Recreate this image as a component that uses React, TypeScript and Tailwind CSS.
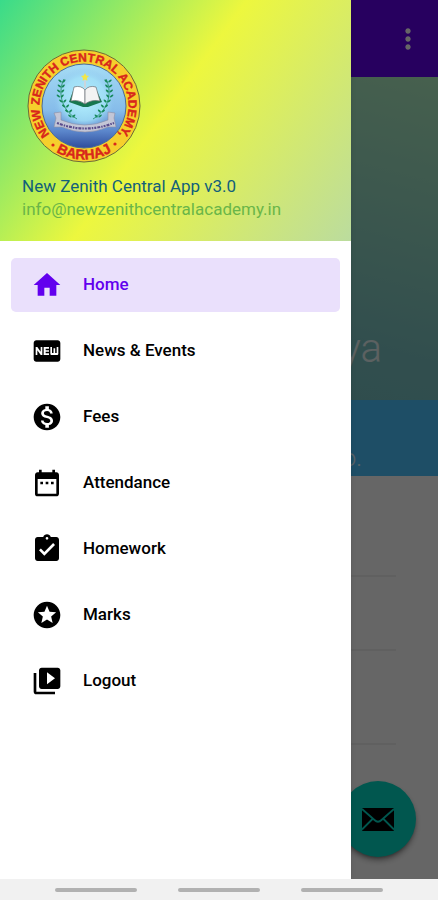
import type { IconType } from "react-icons";
import {
  MdAssignmentTurnedIn,
  MdDateRange,
  MdFiberNew,
  MdHome,
  MdMonetizationOn,
  MdMoreVert,
  MdStars,
  MdVideoLibrary,
} from "react-icons/md";

type MenuEntry = { label: string; icon: IconType; active?: boolean };

const entries: MenuEntry[] = [
  { label: "Home", icon: MdHome, active: true },
  { label: "News & Events", icon: MdFiberNew },
  { label: "Fees", icon: MdMonetizationOn },
  { label: "Attendance", icon: MdDateRange },
  { label: "Homework", icon: MdAssignmentTurnedIn },
  { label: "Marks", icon: MdStars },
  { label: "Logout", icon: MdVideoLibrary },
];

function MenuItem({ label, icon: Icon, active }: MenuEntry) {
  const tone = active ? "bg-[#eae0fc] text-[#6200ee]" : "text-black";
  return (
    <li>
      <a
        href="#"
        aria-current={active ? "page" : undefined}
        className={`flex h-[54px] items-center gap-5 rounded-[5px] pl-5 text-[17px] font-medium ${tone}`}
      >
        <Icon className="size-8" aria-hidden="true" />
        {label}
      </a>
    </li>
  );
}

const leaves = [0, 1, 2, 3, 4, 5, 6, 7];

function Laurel() {
  return (
    <g fill="#16895a">
      <path d="M37 30 C31 42 33 60 50 70" fill="none" stroke="#16895a" strokeWidth="0.8" />
      {leaves.map((i) => {
        const y = 32 + i * 5;
        const x = 35 - Math.sin((i / 7) * 2.4) * 2 + Math.max(0, i - 3) * 2.8;
        return (
          <g key={i}>
            <ellipse cx={x - 2} cy={y} rx="2" ry="0.9" transform={`rotate(35 ${x - 2} ${y})`} />
            <ellipse cx={x + 2} cy={y} rx="2" ry="0.9" transform={`rotate(-45 ${x + 2} ${y})`} />
          </g>
        );
      })}
    </g>
  );
}

function Crest() {
  return (
    <svg viewBox="0 0 114 114" className="size-[114px]" role="img" aria-label="New Zenith Central Academy crest">
      <defs>
        <linearGradient id="sky" x1="0" y1="0" x2="0" y2="1">
          <stop offset="0" stopColor="#a5dcf5" />
          <stop offset="0.55" stopColor="#86bcea" />
          <stop offset="0.8" stopColor="#5b86cb" />
          <stop offset="1" stopColor="#2f4d9c" />
        </linearGradient>
        <radialGradient id="glow">
          <stop offset="0" stopColor="#b4effc" />
          <stop offset="0.7" stopColor="#a2e2f8" stopOpacity="0.8" />
          <stop offset="1" stopColor="#8cc4ee" stopOpacity="0" />
        </radialGradient>
        <path id="ringTop" d="M56.9 101.500 A44.500 44.500 0 1 1 57.1 101.500" />
        <path id="ringBottom" d="M3.500 57 A53.500 53.500 0 0 0 110.500 57" />
      </defs>
      <circle cx="57" cy="57" r="56" fill="#f6cf2c" stroke="#6b6a3a" strokeWidth="1" />
      <circle cx="57" cy="57" r="42" fill="url(#sky)" stroke="#4a6a9a" strokeWidth="1" />
      <circle cx="57" cy="50" r="31" fill="url(#glow)" />
      <text
        fill="#d8261c"
        stroke="#d8261c"
        strokeWidth="0.4"
        fontFamily="'Liberation Sans', Arial, sans-serif"
        fontWeight="700"
        textAnchor="middle"
      >
        <textPath href="#ringTop" startOffset="50%" fontSize="12">
          NEW ZENITH CENTRAL ACADEMY,
        </textPath>
        <textPath href="#ringBottom" startOffset="50%" fontSize="14">
          BARHAJ
        </textPath>
      </text>
      <g fill="#d8261c">
        <circle cx="26" cy="96" r="1.600" />
        <circle cx="88" cy="95" r="1.600" />
      </g>
      <Laurel />
      <g transform="translate(116 0) scale(-1 1)">
        <Laurel />
      </g>
      <path d="M58 24 l1.2 2.6 2.8 .4 -2 2 .4 2.8 -2.4 -1.4 -2.4 1.4 .4 -2.8 -2 -2 2.8 -.4z" fill="#f2e64a" />
      <path d="M57 31 h2 v8 h-2z" fill="#c9d6dc" />
      <path d="M42 53 L46 42 L58 54 L70 42 L75 53 L61 58 L56 58z" fill="#177650" />
      <path d="M47 38 Q54 36 58 41 V55 Q51 50 44 52z" fill="#fff" stroke="#6b7076" strokeWidth="0.7" />
      <path d="M69 38 Q62 36 58 41 V55 Q65 50 73 52z" fill="#f3f3f3" stroke="#6b7076" strokeWidth="0.7" />
      <path d="M27 64 l7 -1 v8 q24 10 47 0 v-8 l7 1 -1 5 2 9 -8 0 q-23 10 -46 0 l-8 0 2 -9z" fill="#c3c6d6" stroke="#8d8fa5" strokeWidth="0.6" />
      <path d="M30 74 q28 11 57 0" fill="none" stroke="#5a4c8c" strokeWidth="2.2" strokeDasharray="2 1 3 1 1.5 1" />
    </svg>
  );
}

function Drawer() {
  return (
    <aside className="absolute inset-y-0 left-0 flex w-[351px] flex-col bg-white shadow-md">
      <header className="bg-[linear-gradient(126deg,#39db8a_0%,#edf73e_47%,#bbdc9e_100%)] pt-[49px] pb-5 pl-[22px]">
        <div className="pl-[5px]">
          <Crest />
        </div>
        <h1 className="pt-3 text-[17px] leading-[22px] text-[#11607a]">New Zenith Central App v3.0</h1>
        <p className="text-[17px] leading-6 text-[#6ab648]">info@newzenithcentralacademy.in</p>
      </header>
      <nav aria-label="Main" className="px-[11px] pt-[17px]">
        <ul className="flex flex-col gap-3">
          {entries.map((entry) => (
            <MenuItem key={entry.label} {...entry} />
          ))}
        </ul>
      </nav>
    </aside>
  );
}

function Page() {
  return (
    <main className="flex grow flex-col bg-white">
      <div className="flex h-[77px] items-center justify-end bg-[#6200ee] pr-[14px]">
        <button aria-label="More options" className="text-white">
          <MdMoreVert className="size-8" />
        </button>
      </div>
      <section className="flex h-[323px] items-end justify-end bg-[linear-gradient(15deg,#70bcbc_0%,#7cc4c4_35%,#b0f0c4_100%)] pr-14 pb-[27px]">
        <p className="text-[40px] leading-12 font-light text-white/80">Vidyalaya</p>
      </section>
      <section className="flex h-[76px] items-end justify-end bg-[#4dc4ff] pr-[76px] pb-1">
        <p className="text-2xl leading-7 font-light text-white/80">No.</p>
      </section>
      <div className="flex flex-col pr-[42px]">
        <div className="h-[101px] border-b-2 border-[#efefef]" />
        <div className="h-[74px] border-b-2 border-[#efefef]" />
        <div className="h-[94px] border-b-2 border-[#efefef]" />
      </div>
    </main>
  );
}

function MailButton() {
  return (
    <button
      aria-label="Send mail"
      className="absolute right-[22px] bottom-[22px] flex size-[76px] items-center justify-center rounded-full bg-[#03dac5] shadow-md shadow-black/40"
    >
      <svg viewBox="0 0 34 24" className="h-6 w-[34px]" aria-hidden="true">
        <rect x="1" y="1" width="32" height="23" rx="1" fill="#000" />
        <path
          d="M1 2 L13.500 13 Q17 16.500 20.500 13 L33 2 M1 22.500 L11.500 12 M33 22.500 L22.500 12"
          fill="none"
          stroke="#03dac5"
          strokeWidth="1.800"
        />
      </svg>
    </button>
  );
}

export default function App() {
  return (
    <div className="flex min-h-screen flex-col font-['Roboto',sans-serif]">
      <div className="relative flex grow flex-col overflow-hidden">
        <Page />
        <MailButton />
        <div className="absolute inset-0 bg-black/60" />
        <Drawer />
      </div>
      <footer className="flex h-[21px] items-center justify-center gap-[41px] bg-[#f1f1f1]">
        <span className="h-1 w-[82px] rounded-full bg-[#b1b1b1]" />
        <span className="h-1 w-[82px] rounded-full bg-[#b1b1b1]" />
        <span className="h-1 w-[82px] rounded-full bg-[#b1b1b1]" />
      </footer>
    </div>
  );
}
